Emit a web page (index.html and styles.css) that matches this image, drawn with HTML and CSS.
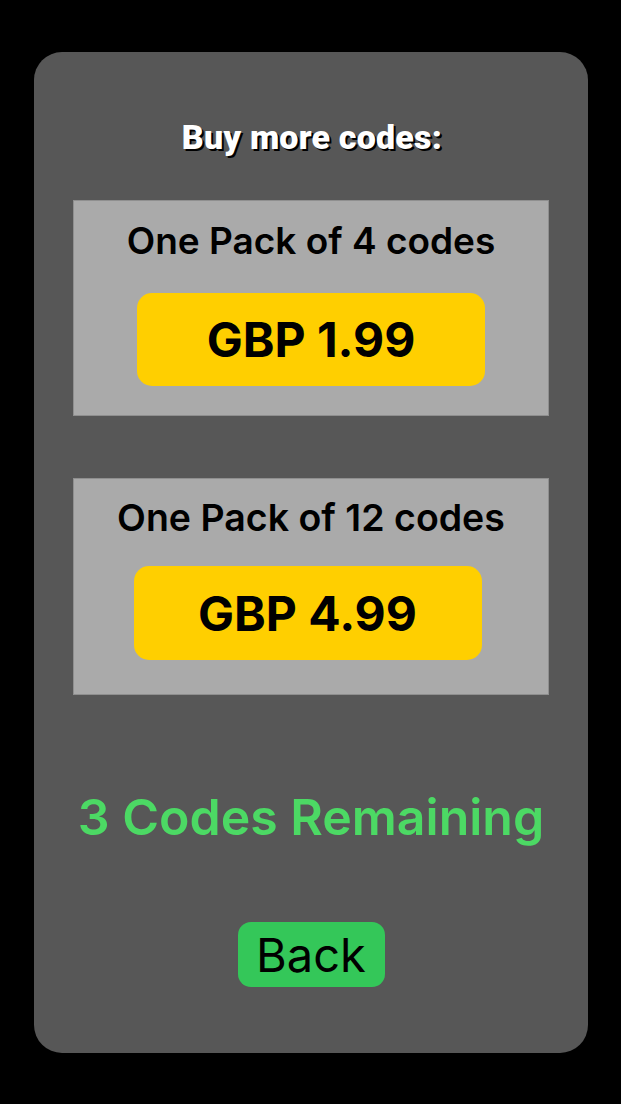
FILE: index.html
```html
<!DOCTYPE html>
<html>
<head>
<meta charset="utf-8">
<link rel="stylesheet" href="styles.css">
</head>
<body>
<div class="card">
  <h1 class="heading">Buy more codes:</h1>
  <div class="pack pack-first">
    <div class="pack-title">One Pack of 4 codes</div>
    <button class="price">GBP 1.99</button>
  </div>
  <div class="pack pack-second">
    <div class="pack-title">One Pack of 12 codes</div>
    <button class="price price-second">GBP 4.99</button>
  </div>
  <div class="remaining">3 Codes Remaining</div>
  <button class="back">Back</button>
</div>
</body>
</html>
```
FILE: styles.css
```css
html, body {
  margin: 0;
  padding: 0;
  background: #000;
}
body {
  width: 621px;
  height: 1104px;
  overflow: hidden;
}
.card {
  margin: 52px 33px 0 34px;
  height: 1001px;
  background: #575757;
  border-radius: 28px;
  display: flex;
  flex-direction: column;
  align-items: center;
  font-family: Inter, "Noto Sans", sans-serif;
}
.heading {
  margin: 65px 0 0 2px;
  height: 40px;
  line-height: 40px;
  font-family: Roboto, "Liberation Sans", sans-serif;
  font-weight: 900;
  font-size: 34px;
  letter-spacing: 0.2px;
  color: #fff;
  text-shadow: 2px 2px 0 #000;
}
.pack {
  box-sizing: border-box;
  width: 476px;
  background: #aaaaaa;
  border: 1px solid #8f8f8f;
  display: flex;
  flex-direction: column;
  align-items: center;
}
.pack-first {
  margin-top: 43px;
  padding: 20px 0 29px;
}
.pack-second {
  margin-top: 62px;
  padding: 19px 0 34px;
}
.pack-title {
  height: 40px;
  line-height: 40px;
  font-size: 37px;
  font-weight: 600;
  color: #000;
}
.pack-second .pack-title {
  font-size: 37.5px;
}
.price {
  margin-top: 32px;
  width: 348px;
  height: 93px;
  border: none;
  border-radius: 15px;
  background: #ffcf00;
  color: #000;
  font-family: Inter, "Noto Sans", sans-serif;
  font-size: 48px;
  font-weight: 700;
  padding: 0;
}
.price-second {
  margin-top: 28px;
  height: 94px;
  margin-right: 7px;
}
.remaining {
  margin-top: 92px;
  height: 60px;
  line-height: 60px;
  font-size: 50px;
  font-weight: 600;
  color: #4cd964;
}
.back {
  margin-top: 75px;
  width: 147px;
  height: 65px;
  border: none;
  border-radius: 13px;
  background: #34c759;
  color: #000;
  font-family: Inter, "Noto Sans", sans-serif;
  font-size: 47px;
  font-weight: 400;
  padding: 0;
}
```
